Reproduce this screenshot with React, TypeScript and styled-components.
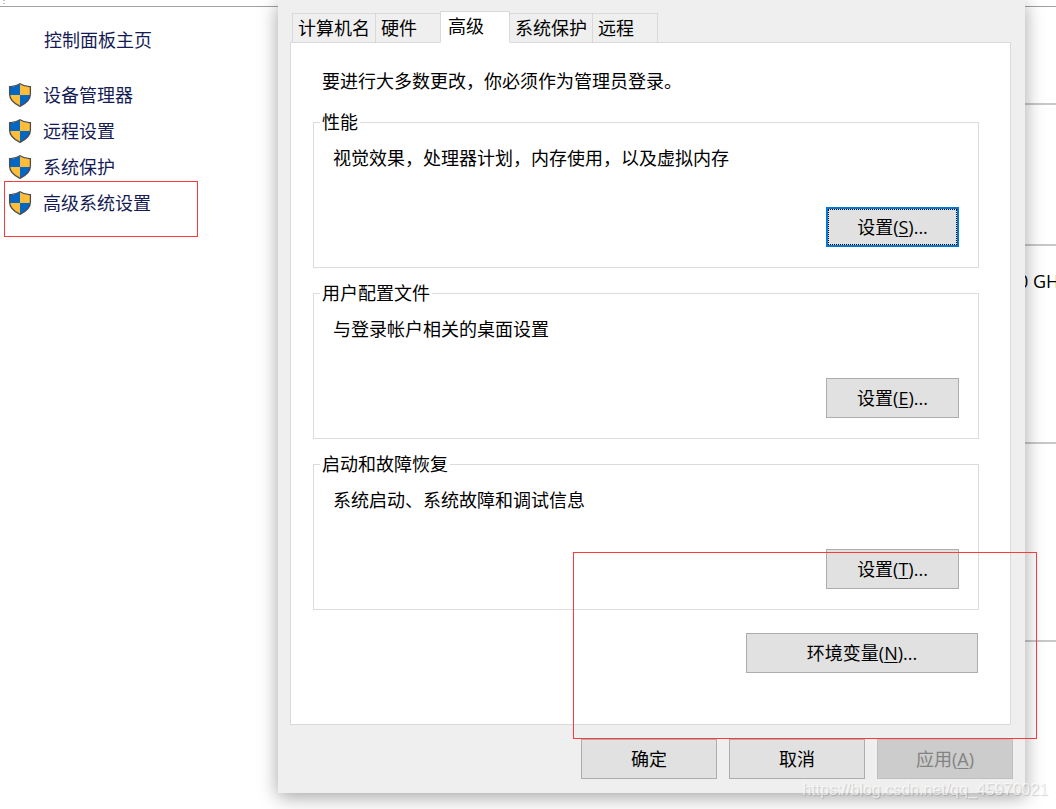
import React from 'react';
import styled, { createGlobalStyle, css } from 'styled-components';

const GlobalStyle = createGlobalStyle`
  * { box-sizing: border-box; }
  body {
    margin: 0;
    background: #fff;
    color: #000;
    font: 400 18px/24px "Open Sans", "Noto Sans CJK SC", sans-serif;
  }
`;

const Page = styled.div`
  position: relative;
  display: grid;
  grid-template-columns: 278px minmax(0, 1fr) 31px;
  align-items: start;
  min-height: 100vh;
  overflow: hidden;
`;

const TopRule = styled.div`
  height: 7px;
  padding-left: 3px;
  border-bottom: 1px solid #a0a0a0;
`;

const Grip = styled.div`
  width: 2px;
  height: 4px;
  border-top: 1px solid #c0c0c0;
  border-bottom: 1px solid #c0c0c0;
`;

const Home = styled.a`
  display: block;
  margin: 21px 0 31px 44px;
  color: #151c55;
  text-decoration: none;
`;

const Links = styled.ul`
  list-style: none;
  margin: 0;
  padding: 0 0 0 8px;
`;

const LinkItem = styled.li`
  position: relative;
  height: 36px;
`;

const TaskLink = styled.a`
  display: flex;
  align-items: center;
  gap: 11px;
  height: 24px;
  color: #151c55;
  text-decoration: none;
`;

const Annotation = styled.span`
  position: absolute;
  border: 1px solid #fb3b3b;
  pointer-events: none;
`;

const ItemAnnotation = styled(Annotation)`
  left: -4px;
  top: -10px;
  width: 194px;
  height: 56px;
`;

const DialogAnnotation = styled(Annotation)`
  right: -12px;
  bottom: 54px;
  width: 464px;
  height: 187px;
`;

const Dialog = styled.section`
  position: relative;
  z-index: 1;
  padding: 11px 12px 14px;
  background: #efefef;
  box-shadow: 0 4px 18px rgba(0, 0, 0, 0.36);
`;

const TabList = styled.div`
  display: flex;
  align-items: flex-end;
  height: 32px;
  padding-left: 3px;
  margin-bottom: -1px;
`;

const Tab = styled.button<{ $active?: boolean }>`
  position: relative;
  height: 30px;
  min-width: 66px;
  margin: 0 0 0 -1px;
  padding: 0 5px;
  border: 1px solid #d9d9d9;
  background: #efefef;
  color: #000;
  font: inherit;
  text-align: left;
  ${({ $active }) =>
    $active &&
    css`
      z-index: 1;
      height: 32px;
      min-width: 70px;
      padding: 0 7px 2px;
      border-bottom-color: #fff;
      background: #fff;
    `}
`;

const Panel = styled.div`
  margin-right: 2px;
  padding: 26px 31px 51px 22px;
  border: 1px solid #d9d9d9;
  background: #fff;
`;

const Intro = styled.p`
  margin: 0 0 17px 9px;
`;

const Group = styled.fieldset`
  display: flex;
  flex-direction: column;
  margin: 0 0 13px;
  padding: 12px 19px 20px;
  border: 1px solid #dcdcdc;
  min-width: 0;
`;

const Legend = styled.legend`
  margin-left: -13px;
  padding: 0 2px;
`;

const Description = styled.p`
  margin: 0 0 37px;
`;

const Button = styled.button<{ $width: number; $focused?: boolean }>`
  width: ${({ $width }) => $width}px;
  height: 40px;
  padding: 0;
  border: 1px solid #adadad;
  background: #e1e1e1;
  color: #000;
  font: inherit;
  u { text-underline-offset: 2px; text-decoration-thickness: 1px; }
  ${({ $focused }) =>
    $focused &&
    css`
      border: 2px solid #0078d7;
      outline: 1px dotted #000;
      outline-offset: -3px;
    `}
  &:disabled {
    border-color: #bfbfbf;
    background: #ccc;
    color: #838383;
  }
`;

const GroupButton = styled(Button)`
  align-self: flex-end;
`;

const PanelActions = styled.div`
  display: flex;
  justify-content: flex-end;
  margin-top: 23px;
  padding-right: 1px;
`;

const Footer = styled.footer`
  display: flex;
  justify-content: flex-end;
  gap: 12px;
  margin-top: 14px;
`;

const Section = styled.div<{ $height: number }>`
  height: ${({ $height }) => $height}px;
  border-bottom: 2px solid #c8c8c8;
`;

const Spec = styled.p`
  margin: 0 0 0 -7px;
  padding-top: 23px;
  white-space: nowrap;
`;

const Watermark = styled.div`
  position: absolute;
  z-index: 2;
  right: 8px;
  bottom: 8px;
  color: rgba(255, 255, 255, 0.65);
  font: 16px/22px "Liberation Sans", sans-serif;
  text-shadow: 1px 1px 1px rgba(0, 0, 0, 0.16);
`;

const Shield = () => (
  <svg width="24" height="24" viewBox="0 0 24 24" aria-hidden="true">
    <path d="M12 1C9 3 5 4 1.700 3.800V12H12Z" fill="#0067c7" />
    <path d="M12 1C15 3 19 4 22.300 3.800V12H12Z" fill="#ffbd38" />
    <path d="M1.700 12C2 17 6 20.500 12 23.200V12Z" fill="#ffbd38" />
    <path d="M22.300 12C22 17 18 20.500 12 23.200V12Z" fill="#0067c7" />
    <path
      d="M12 .8C9 2.800 5 3.800 1.600 3.600V11C1.600 17 6 20.500 12 23.300C18 20.500 22.400 17 22.400 11V3.600C19 3.800 15 2.800 12 .8Z"
      fill="none"
      stroke="#4b4d4f"
      strokeWidth="1.300"
    />
  </svg>
);

const tasks = ['设备管理器', '远程设置', '系统保护', '高级系统设置'];
const tabs = ['计算机名', '硬件', '高级', '系统保护', '远程'];
const groups = [
  { title: '性能', text: '视觉效果，处理器计划，内存使用，以及虚拟内存', key: 'S' },
  { title: '用户配置文件', text: '与登录帐户相关的桌面设置', key: 'E' },
  { title: '启动和故障恢复', text: '系统启动、系统故障和调试信息', key: 'T' },
];

export default function App() {
  return (
    <Page>
      <GlobalStyle />
      <nav>
        <TopRule><Grip /></TopRule>
        <Home href="#home">控制面板主页</Home>
        <Links>
          {tasks.map((task, i) => (
            <LinkItem key={task}>
              <TaskLink href={`#task-${i}`}><Shield />{task}</TaskLink>
              {i === 3 && <ItemAnnotation />}
            </LinkItem>
          ))}
        </Links>
      </nav>
      <Dialog>
        <TabList role="tablist">
          {tabs.map((tab) => (
            <Tab key={tab} type="button" role="tab" aria-selected={tab === '高级'} $active={tab === '高级'}>
              {tab}
            </Tab>
          ))}
        </TabList>
        <Panel role="tabpanel">
          <Intro>要进行大多数更改，你必须作为管理员登录。</Intro>
          {groups.map((group, i) => (
            <Group key={group.key}>
              <Legend>{group.title}</Legend>
              <Description>{group.text}</Description>
              <GroupButton type="button" $width={133} $focused={i === 0}>
                设置(<u>{group.key}</u>)...
              </GroupButton>
            </Group>
          ))}
          <PanelActions>
            <Button type="button" $width={232}>环境变量(<u>N</u>)...</Button>
          </PanelActions>
        </Panel>
        <Footer>
          <Button type="button" $width={136}>确定</Button>
          <Button type="button" $width={136}>取消</Button>
          <Button type="button" $width={136} disabled>应用(<u>A</u>)</Button>
        </Footer>
        <DialogAnnotation />
      </Dialog>
      <aside>
        <TopRule />
        <Section $height={98} />
        <Section $height={141} />
        <Section $height={198}><Spec>0 GH</Spec></Section>
        <Section $height={198} />
      </aside>
      <Watermark>https://blog.csdn.net/qq_45970021</Watermark>
    </Page>
  );
}
